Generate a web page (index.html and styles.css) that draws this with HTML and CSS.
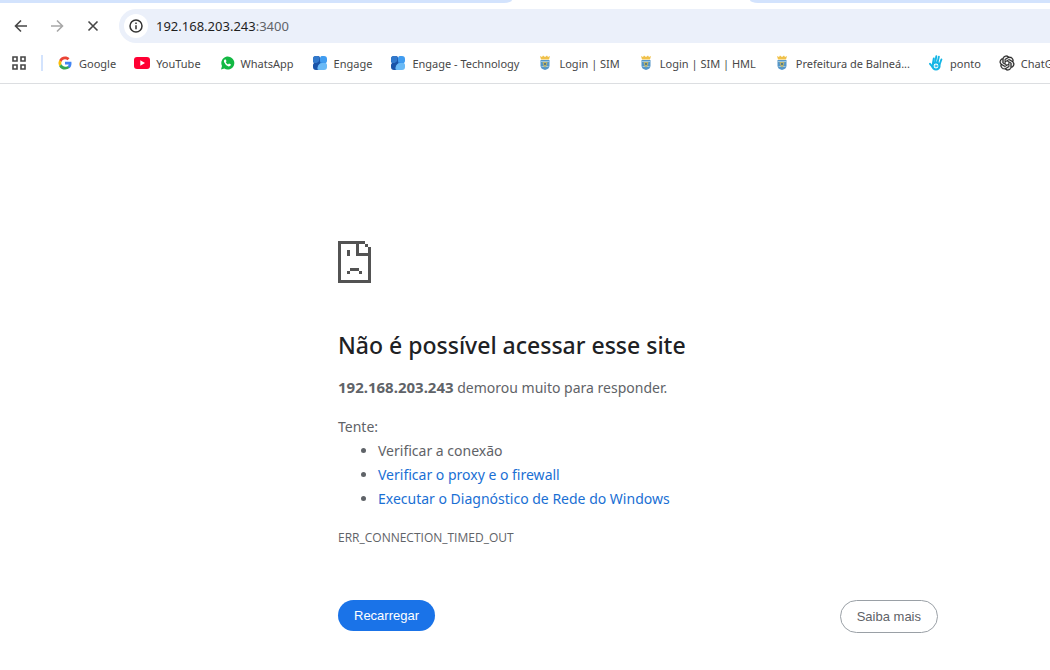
FILE: index.html
```html
<!DOCTYPE html>
<html lang="pt-BR">
<head>
<meta charset="utf-8">
<title>192.168.203.243:3400</title>
<link rel="stylesheet" href="styles.css">
</head>
<body>
<svg class="symbols" aria-hidden="true">
  <symbol id="engage" viewBox="0 0 16 16">
    <path d="M3 3H13V13H3Z" fill="#2b72c6"/>
    <path d="M4 1H6Q8 1 8 3V13Q8 15 6 15H4Q1 15 1 12V10Q1 9 2 8Q1 7 1 6V4Q1 1 4 1Z" fill="#1953a8"/>
    <path d="M4 1H5.500Q7.500 1 7.500 3.500Q7.500 7 4.500 8H2Q1 7 1 5.500V4Q1 1 4 1Z" fill="#3279cc"/>
    <path d="M10 1H12Q15 1 15 4V6Q15 7 14 8H11Q8 8 8 5.500Q7.500 1 10 1Z" fill="#409cf0"/>
    <path d="M10 8H14Q15 9 15 10V12Q15 15 12 15H7Q5 15 5.500 12.500Q6.500 8 10 8Z" fill="#6abaf6"/>
  </symbol>
  <symbol id="crest" viewBox="0 0 16 16">
    <path d="M3 1l2 1 1-1.500L8 2l2-1.500L11 2l2-1-1 3.500H4Z" fill="#f0c14a"/>
    <path d="M3.500 5h9v5.500Q12.500 14 8 15Q3.500 14 3.500 10.500Z" fill="#5596c8"/>
    <path d="M4 6.500h8M4.500 11.500h7" stroke="#9cc5df"/>
    <path d="M5.500 7h5l-1 4L8 12.500 6.500 11Z" fill="#b9b36d"/>
    <path d="M7 8h2v2H7Z" fill="#557d8c"/>
  </symbol>
</svg>

<header class="browser">
  <div class="tabstrip"><span class="tab-edge tab-left"></span><span class="tab-edge tab-right"></span></div>
  <div class="toolbar">
    <button class="nav" aria-label="Voltar"><svg viewBox="0 0 16 16"><path d="M14 8H3M8 2.500L2.500 8L8 13.500"/></svg></button>
    <button class="nav nav-off" aria-label="Avançar"><svg viewBox="0 0 16 16"><path d="M2 8h11M8 2.500L13.500 8L8 13.500"/></svg></button>
    <button class="nav" aria-label="Parar"><svg viewBox="0 0 16 16"><path d="M3.500 3.500l9 9M12.500 3.500l-9 9"/></svg></button>
    <div class="omnibox">
      <button class="info" aria-label="Informações do site"><svg viewBox="0 0 16 16"><circle cx="8" cy="8" r="6"/><path d="M8 7.300v4M8 4.500v1.500"/></svg></button>
      <span class="address">192.168.203.243<span class="port">:3400</span></span>
    </div>
  </div>
  <nav class="bookmarks">
    <button class="apps" aria-label="Aplicativos"><svg viewBox="0 0 16 16"><path d="M2 2h4v4H2ZM10 2h4v4h-4ZM2 10h4v4H2ZM10 10h4v4h-4Z"/></svg></button>
    <span class="divider"></span>
    <a class="bookmark" href="#"><svg viewBox="0 0 48 48"><path fill="#ea4335" d="M24 13c3 0 5.500 1 7.500 3l6-6C34 6.500 29.500 4.500 24 4.500c-8 0-14.500 4.500-17.500 11l7 5.500C15 16.500 19 13 24 13z"/><path fill="#4285f4" d="M43.500 24.500c0-1.500-.2-3-.5-4.200H24V28.500h11c-.5 2.500-2 4.700-4 6l6.500 5.200c3.800-3.500 6-8.700 6-15.200z"/><path fill="#fbbc05" d="M13.500 28c-1-2.500-1-5 0-7.500l-7-5.300a20 20 0 0 0 0 18.200z"/><path fill="#34a853" d="M24 43.500c5.500 0 10-1.800 13.500-5L31 33.500c-6 4-14.500 1.500-17.500-5.500l-7 5.400C10 39.500 16.500 43.500 24 43.500z"/></svg>Google</a>
    <a class="bookmark" href="#"><svg viewBox="0 0 16 16"><rect y="2" width="16" height="12" rx="3" fill="#f03"/><path d="M6.300 5.300L11 8l-4.700 2.700Z" fill="#fff"/></svg>YouTube</a>
    <a class="bookmark" href="#"><svg viewBox="0 0 16 16"><path d="M2 14.500L3 11A6.500 6.500 0 1 1 5.400 13.600Z" fill="#12b843"/><path d="M5.700 4.500Q4.500 5 5 7Q6.500 10.500 9.500 11.500Q11.700 11.500 12 9.500L10 8.500L9 9.500Q7.500 8.800 6.800 7.300L7.500 6.300L6.800 4.500Z" fill="#fff"/></svg>WhatsApp</a>
    <a class="bookmark" href="#"><svg><use href="#engage"/></svg>Engage</a>
    <a class="bookmark" href="#"><svg><use href="#engage"/></svg>Engage - Technology</a>
    <a class="bookmark" href="#"><svg><use href="#crest"/></svg>Login | SIM</a>
    <a class="bookmark" href="#"><svg><use href="#crest"/></svg>Login | SIM | HML</a>
    <a class="bookmark" href="#"><svg><use href="#crest"/></svg>Prefeitura de Balneá...</a>
    <a class="bookmark" href="#"><svg viewBox="0 0 16 16"><g fill="none" stroke="#13b5e5" stroke-linecap="round"><path stroke-width="1.900" d="M4.800 9L5.800 3.500M7.300 7L8.300 1.300M9.700 7L10.900 1.600M11.600 9.500L13.400 4.500M2 8.800L4.500 12"/><circle cx="8" cy="11" r="3.500" stroke-width="2.200"/><circle cx="8" cy="11" r="1"/></g></svg>ponto</a>
    <a class="bookmark" href="#"><svg viewBox="-1 -1 26 26"><path fill="#222" stroke="#222" stroke-width=".5" d="M22.280 9.820a5.980 5.980 0 0 0-.52-4.910 6.050 6.050 0 0 0-6.510-2.900A6.070 6.070 0 0 0 4.980 4.180a5.980 5.980 0 0 0-4 2.900 6.050 6.050 0 0 0 .74 7.100 5.980 5.980 0 0 0 .51 4.910 6.050 6.050 0 0 0 6.520 2.900A5.980 5.980 0 0 0 13.260 24a6.060 6.060 0 0 0 5.770-4.210 5.990 5.990 0 0 0 4-2.900 6.060 6.060 0 0 0-.75-7.070zm-9.020 12.610a4.480 4.480 0 0 1-2.880-1.040l.14-.08 4.780-2.760a.8.8 0 0 0 .39-.68v-6.740l2.020 1.170v5.620a4.500 4.500 0 0 1-4.450 4.510zM3.600 18.300a4.470 4.470 0 0 1-.54-3.010l.14.080 4.780 2.760a.77.77 0 0 0 .78 0l5.840-3.370v2.400l-4.860 2.790A4.500 4.500 0 0 1 3.600 18.300zM2.340 7.900a4.490 4.490 0 0 1 2.370-1.980V11.600a.77.77 0 0 0 .39.68l5.810 3.350-2.020 1.170-4.890-2.760A4.500 4.500 0 0 1 2.340 7.900zm16.600 3.850l-5.840-3.380L15.120 7.200l4.890 2.790a4.500 4.500 0 0 1-.68 8.100v-5.680a.79.79 0 0 0-.39-.66zm2-3.020l-4.910-2.870a.78.78 0 0 0-.79 0L9.400 9.230V6.900l4.910-2.870a4.500 4.500 0 0 1 6.630 4.700zm-12.640 4.130l-2.020-1.160V6.070a4.500 4.500 0 0 1 7.380-3.450l-4.970 2.840a.8.8 0 0 0-.39.68zm1.100-2.360L12 9l2.600 1.500v3L12 15l-2.600-1.500z"/></svg>ChatGPT</a>
  </nav>
</header>

<main class="error">
  <svg class="sad-page" viewBox="0 0 11 14" shape-rendering="crispEdges" aria-hidden="true"><path d="M0 0H9V1H7V4H10V2H11V14H0ZM1 1V13H10V5H6V1ZM9 1H10V2H9ZM3 3H4V5H3ZM4 9H7V10H4ZM3 10H4V11H3ZM7 10H8V11H7Z" fill-rule="evenodd"/></svg>
  <h1>Não é possível acessar esse site</h1>
  <p><strong>192.168.203.243</strong> demorou muito para responder.</p>
  <div class="suggestions">
    <p>Tente:</p>
    <ul>
      <li>Verificar a conexão</li>
      <li><a href="#">Verificar o proxy e o firewall</a></li>
      <li><a href="#">Executar o Diagnóstico de Rede do Windows</a></li>
    </ul>
  </div>
  <p class="code">ERR_CONNECTION_TIMED_OUT</p>
  <div class="actions">
    <button class="reload">Recarregar</button>
    <button class="more">Saiba mais</button>
  </div>
</main>
</body>
</html>
```
FILE: styles.css
```css
* { box-sizing: border-box; }
body { margin: 0; overflow-x: hidden; background: #fff; color: #5f6368; font-family: "Noto Sans", "Open Sans", sans-serif; }
button { padding: 0; border: 0; background: none; font-family: inherit; cursor: pointer; }
a { color: #1a6fd4; text-decoration: none; }
.symbols { position: absolute; width: 0; height: 0; }

.browser { overflow: hidden; border-bottom: 1px solid #dcdee1; }
.tabstrip { display: flex; height: 3px; background: #fff; }
.tab-edge { background: #d3e3fd; }
.tab-left { width: 512px; border-bottom-right-radius: 8px 3px; }
.tab-right { flex: 1; margin-left: 238px; border-bottom-left-radius: 8px 3px; }
.toolbar { display: flex; align-items: center; padding: 6px 0 0 11px; gap: 16px; }
.nav { display: flex; justify-content: center; width: 20px; }
.nav svg { width: 16px; height: 16px; fill: none; stroke: #474747; stroke-width: 1.6; }
.nav-off svg { stroke: #a8a8a8; }
.omnibox { display: flex; flex: 1; align-items: center; gap: 8px; height: 34px; padding-left: 5px; border-radius: 17px 0 0 17px; background: #ebf0fa; }
.info { display: flex; align-items: center; justify-content: center; width: 24px; height: 24px; border-radius: 50%; background: #fff; }
.info svg { width: 16px; height: 16px; fill: none; stroke: #333; stroke-width: 1.5; }
.address { color: #1f1f1f; font-size: 13px; }
.port { color: #5f6368; }

.bookmarks { display: flex; align-items: center; gap: 18px; height: 40px; padding-left: 11px; white-space: nowrap; }
.apps { display: flex; flex: none; }
.apps svg { width: 16px; height: 16px; fill: none; stroke: #474747; stroke-width: 1.6; }
.divider { flex: none; width: 2px; height: 16px; margin: 0 -4px; background: #d3e3fd; }
.bookmark { display: flex; flex: none; align-items: center; gap: 6px; color: #474747; font-size: 11px; }
.bookmark svg { width: 16px; height: 16px; }

.error { max-width: 938px; padding: 157px 0 0 338px; font-size: 14px; line-height: 24px; }
.sad-page { display: block; width: 33px; height: 42px; fill: #535353; }
h1 { margin: 48px 0 16px; color: #202124; font-size: 23px; font-weight: 500; line-height: 29px; }
p { margin: 0; }
strong { font-size: 15px; line-height: 1; }
.suggestions { margin-top: 15px; }
ul { margin: 0; padding-left: 40px; }
.code { margin-top: 15px; font-family: "Open Sans", sans-serif; font-size: 12px; }
.actions { display: flex; justify-content: space-between; margin-top: 50px; font-family: "Liberation Sans", sans-serif; }
.actions button { padding: 0 16px; border-radius: 17px; font-size: 13px; }
.actions .reload { height: 31px; background: #1a73e8; color: #fff; }
.actions .more { height: 33px; border: 1px solid #9aa0a6; color: #5f6368; }
```
